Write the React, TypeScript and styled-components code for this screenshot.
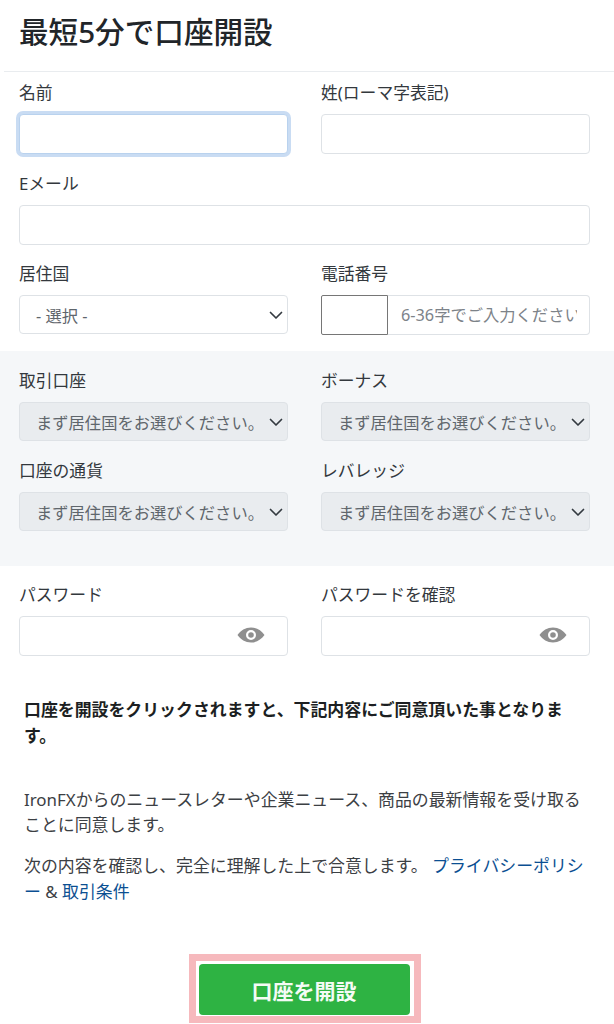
import { FC } from 'react'
import styled, { createGlobalStyle } from 'styled-components'

const GlobalStyle = createGlobalStyle`
  html, body {
    margin: 0;
    padding: 0;
    background: #fff;
    font-family: 'Noto Sans', 'Noto Sans CJK JP', sans-serif;
    color: #212529;
  }
`

const Page = styled.div`
  width: 614px;
  height: 1024px;
  overflow: hidden;
`

const Header = styled.div`
  height: 72px;
  margin-left: 4px;
  padding-left: 15px;
  border-bottom: 1px solid #e9ecef;
  box-sizing: border-box;
`

const Title = styled.h1`
  margin: 0;
  padding-top: 11px;
  font-size: 29.6px;
  line-height: 42px;
  font-weight: 500;
`

const Grid = styled.div<{ $top?: number }>`
  display: grid;
  grid-template-columns: 269px 269px;
  column-gap: 33px;
  padding: ${(p) => p.$top ?? 0}px 0 0 19px;
`

const Field = styled.div<{ $wide?: boolean; $h?: number }>`
  ${(p) => (p.$wide ? 'grid-column: 1 / 3;' : '')}
  height: ${(p) => p.$h ?? 90}px;
`

const Label = styled.label`
  display: block;
  height: 24px;
  margin-bottom: 9px;
  font-size: 16.8px;
  line-height: 24px;
  white-space: nowrap;
  color: #33383d;
`

const Input = styled.div<{ $focus?: boolean }>`
  position: relative;
  height: 40px;
  box-sizing: border-box;
  background: #fff;
  border: 1px solid ${(p) => (p.$focus ? '#b9d2ee' : '#dee2e6')};
  border-radius: 4px;
  box-shadow: ${(p) => (p.$focus ? '0 0 0 3px #c9dcf3' : 'none')};
`

const Select = styled.div<{ $disabled?: boolean }>`
  display: flex;
  align-items: center;
  justify-content: space-between;
  height: 39px;
  box-sizing: border-box;
  padding: 0 4px 0 16px;
  background: ${(p) => (p.$disabled ? '#e9ecef' : '#fff')};
  border: 1px solid #dee2e6;
  border-radius: 4px;
  font-size: 16.3px;
  color: #5f666c;
  white-space: nowrap;
  overflow: hidden;
`

const Arrow = styled.svg`
  flex: none;
  width: 14px;
  height: 14px;
  margin-left: -2px;
  fill: none;
  stroke: #343a40;
  stroke-width: 1.7;
  stroke-linecap: round;
  stroke-linejoin: round;
`

const PhoneRow = styled.div`
  display: flex;
  height: 40px;
`

const Prefix = styled.div`
  flex: none;
  width: 67px;
  box-sizing: border-box;
  border: 1px solid #767676;
  border-radius: 2px 0 0 2px;
`

const PhoneInput = styled.div`
  flex: 1;
  min-width: 0;
  box-sizing: border-box;
  padding: 0 12px 0 13px;
  border: 1px solid #dee2e6;
  border-left: 0;
  border-radius: 0 4px 4px 0;
`

const Placeholder = styled.div`
  font-size: 16.3px;
  line-height: 38px;
  color: #7d8389;
  white-space: nowrap;
  overflow: hidden;
`

const GreySection = styled.section`
  height: 215px;
  padding-top: 18.5px;
  box-sizing: border-box;
  background: #f5f7f9;
`

const EyeButton = styled.svg`
  position: absolute;
  top: 10px;
  right: 22px;
  width: 28px;
  height: 16px;
  fill: #8f8f8f;
`

const Notes = styled.div`
  padding: 41px 24px 0 24px;
  font-size: 16.9px;
  line-height: 25.5px;
`

const Strong = styled.p`
  margin: 0 0 38.5px;
  font-weight: 700;
  color: #1c1f22;
`

const Note = styled.p`
  margin: 0 0 15.5px;
  color: #3c4044;
`

const Link = styled.a`
  color: #0b4f92;
  text-decoration: none;
`

const Footer = styled.div`
  display: flex;
  justify-content: center;
  margin-top: 50px;
`

const Outline = styled.div`
  margin-left: -5px;
  padding: 3px 4px 1px 3px;
  border: 7px solid #f6b9bd;
`

const Submit = styled.button`
  display: block;
  width: 211px;
  height: 51px;
  padding: 0;
  border: 0;
  border-radius: 4px;
  background: #2eb343;
  color: #f4fbf5;
  font-family: inherit;
  font-size: 21px;
  font-weight: 700;
`

const Chevron = () => (
  <Arrow viewBox="0 0 14 14">
    <path d="M1.500 4.500L7 10l5.500-5.500" />
  </Arrow>
)

const Eye = () => (
  <EyeButton viewBox="0 0 28 16">
    <path
      fillRule="evenodd"
      d="M14 0.500C8.500 0.500 3.500 3.600 0.500 8c3 4.400 8 7.500 13.500 7.500S24.500 12.400 27.500 8C24.500 3.600 19.500 0.500 14 0.500zM14 3a5 5 0 1 1 0 10 5 5 0 0 1 0-10zm0 2.200a2.800 2.800 0 1 0 0 5.600 2.800 2.800 0 0 0 0-5.600z"
    />
  </EyeButton>
)

const WAIT = 'まず居住国をお選びください。'

const App: FC = () => (
  <Page>
    <GlobalStyle />
    <Header>
      <Title>最短5分で口座開設</Title>
    </Header>

    <Grid $top={9}>
      <Field $h={90.5}>
        <Label>名前</Label>
        <Input $focus />
      </Field>
      <Field $h={90.5}>
        <Label>姓(ローマ字表記)</Label>
        <Input />
      </Field>
      <Field $wide $h={90.5}>
        <Label>Eメール</Label>
        <Input />
      </Field>
      <Field $h={88.5}>
        <Label>居住国</Label>
        <Select>
          - 選択 -
          <Chevron />
        </Select>
      </Field>
      <Field $h={88.5}>
        <Label>電話番号</Label>
        <PhoneRow>
          <Prefix />
          <PhoneInput>
            <Placeholder>6-36字でご入力ください</Placeholder>
          </PhoneInput>
        </PhoneRow>
      </Field>
    </Grid>

    <GreySection>
      <Grid>
        <Field>
          <Label>取引口座</Label>
          <Select $disabled>
            {WAIT}
            <Chevron />
          </Select>
        </Field>
        <Field>
          <Label>ボーナス</Label>
          <Select $disabled>
            {WAIT}
            <Chevron />
          </Select>
        </Field>
        <Field>
          <Label>口座の通貨</Label>
          <Select $disabled>
            {WAIT}
            <Chevron />
          </Select>
        </Field>
        <Field>
          <Label>レバレッジ</Label>
          <Select $disabled>
            {WAIT}
            <Chevron />
          </Select>
        </Field>
      </Grid>
    </GreySection>

    <Grid $top={17.5}>
      <Field $h={73}>
        <Label>パスワード</Label>
        <Input>
          <Eye />
        </Input>
      </Field>
      <Field $h={73}>
        <Label>パスワードを確認</Label>
        <Input>
          <Eye />
        </Input>
      </Field>
    </Grid>

    <Notes>
      <Strong>口座を開設をクリックされますと、下記内容にご同意頂いた事となります。</Strong>
      <Note>IronFXからのニュースレターや企業ニュース、商品の最新情報を受け取ることに同意します。</Note>
      <Note>
        次の内容を確認し、完全に理解した上で合意します。 <Link>プライバシーポリシー</Link> &amp; <Link>取引条件</Link>
      </Note>
    </Notes>

    <Footer>
      <Outline>
        <Submit>口座を開設</Submit>
      </Outline>
    </Footer>
  </Page>
)

export default App
